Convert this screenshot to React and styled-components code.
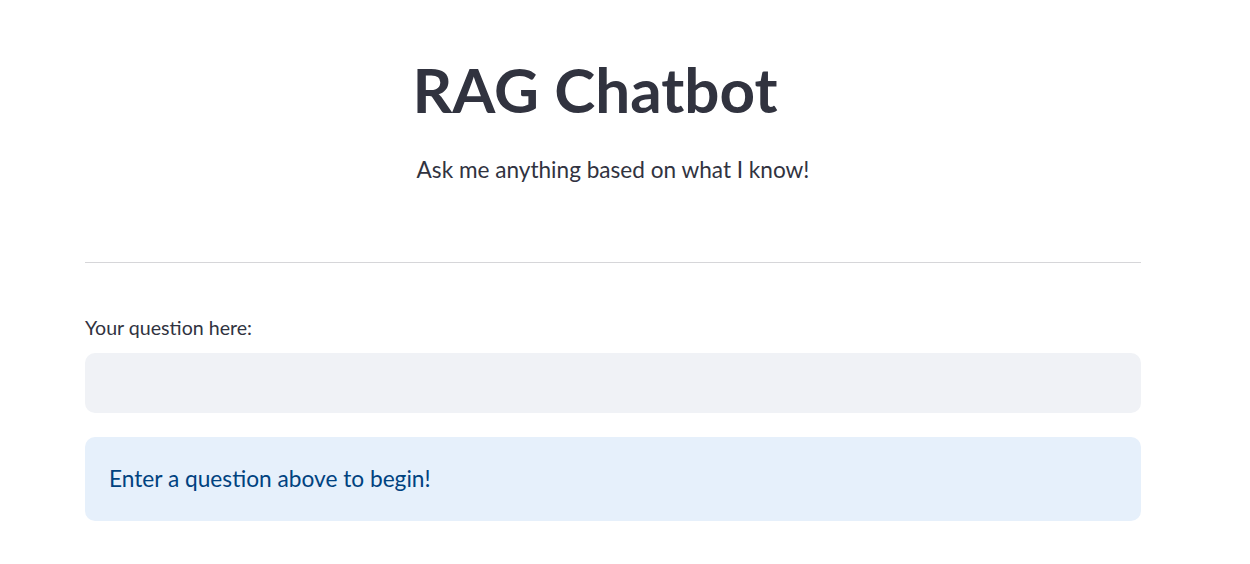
import React, { useState } from 'react'
import styled, { createGlobalStyle } from 'styled-components'

const GlobalStyle = createGlobalStyle`
  html, body {
    margin: 0;
    padding: 0;
    background: #fff;
  }
  body {
    font-family: Lato, "Noto Sans", sans-serif;
    color: #31333f;
  }
`

const Page = styled.main`
  padding: 52px 109px 0 85px;
  display: flex;
  flex-direction: column;
`

const Title = styled.h1`
  margin: 0;
  padding-right: 36px;
  text-align: center;
  font-size: 62px;
  font-weight: 700;
  line-height: 1.2;
  color: #31333f;
`

const Subtitle = styled.p`
  margin: 27px 0 0 0;
  text-align: center;
  font-size: 22.6px;
  line-height: 1.5;
  color: #31333f;
`

const Divider = styled.hr`
  margin: 75px 0 0 0;
  border: none;
  border-top: 1px solid #d6d6d9;
`

const Field = styled.label`
  margin-top: 52px;
  display: flex;
  flex-direction: column;
  gap: 12px;
  font-size: 19.6px;
  line-height: 1.3;
`

const Input = styled.input`
  height: 60px;
  box-sizing: border-box;
  border: none;
  border-radius: 10px;
  background: #f0f2f6;
  padding: 0 18px;
  font-family: inherit;
  font-size: 20px;
  color: #31333f;
  outline: none;
`

const Notice = styled.div`
  margin-top: 24px;
  height: 84px;
  box-sizing: border-box;
  display: flex;
  align-items: center;
  padding: 0 24px;
  border-radius: 10px;
  background: ${p => (p.$kind === 'info' ? '#e6f0fb' : '#f0f2f6')};
  color: ${p => (p.$kind === 'info' ? '#004280' : '#31333f')};
  font-size: 22.7px;
`

export default function App() {
  const [question, setQuestion] = useState('')

  return (
    <>
      <GlobalStyle />
      <Page>
        <Title>RAG Chatbot</Title>
        <Subtitle>Ask me anything based on what I know!</Subtitle>
        <Divider />
        <Field>
          Your question here:
          <Input value={question} onChange={e => setQuestion(e.target.value)} />
        </Field>
        <Notice $kind='info'>Enter a question above to begin!</Notice>
      </Page>
    </>
  )
}
